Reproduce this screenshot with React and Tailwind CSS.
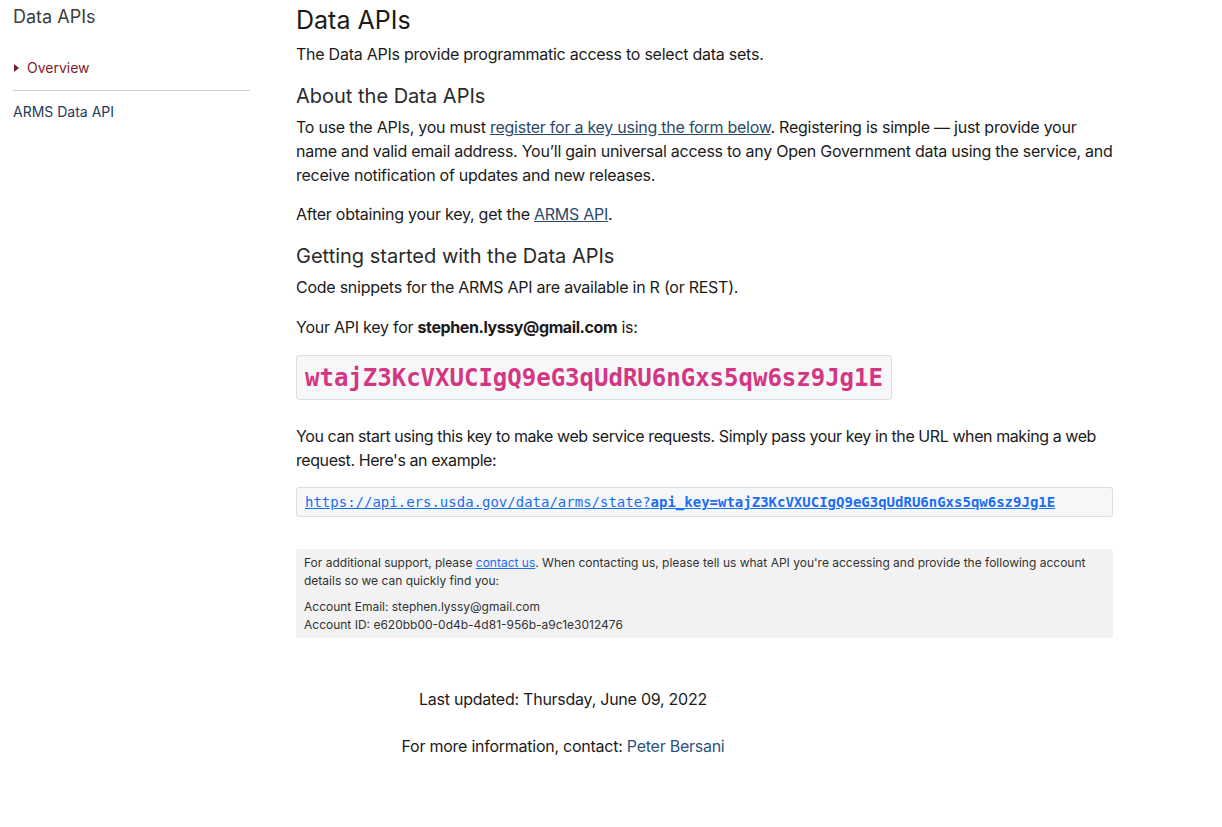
export default function App() {
  const key = "wtajZ3KcVXUCIgQ9eG3qUdRU6nGxs5qw6sz9Jg1E";
  return (
    <div className="flex min-h-[827px] bg-white text-[#1b1b1b]" style={{ fontFamily: "Inter, 'Noto Sans', sans-serif" }}>
      <aside className="w-[250px] shrink-0 pl-[13px]">
        <div className="mt-[5px] text-[18px] leading-[24px] text-[#3d3d3d]">Data APIs</div>
        <div className="mt-[29px] flex items-center gap-[8px] text-[14px] leading-[20px] text-[#7d1a2b]">
          <svg width="5" height="8" viewBox="0 0 5 8" className="ml-[1px]"><path d="M0 0 L5 4 L0 8 Z" fill="#7d1a2b" /></svg>
          <span>Overview</span>
        </div>
        <div className="mt-[12px] h-px bg-[#cfcfcf]" />
        <div className="mt-[11px] text-[14px] leading-[20px] text-[#1f3b5a]">ARMS Data API</div>
      </aside>
      <main className="ml-[46px] w-[817px] shrink-0 tracking-[-0.25px]">
        <h1 className="mt-[4px] text-[25px] leading-[32px] font-normal tracking-normal">Data APIs</h1>
        <p className="mt-[6px] text-[16px] leading-[24px]">The Data APIs provide programmatic access to select data sets.</p>
        <h2 className="mt-[16px] text-[20px] leading-[28px] font-normal text-[#2a2a2a] tracking-normal">About the Data APIs</h2>
        <p className="mt-[5px] text-[16px] leading-[24px]">
          To use the APIs, you must <a className="underline text-[#2c4a6b]">register for a key using the form below</a>. Registering is simple — just provide your name and valid email address. You’ll gain universal access to any Open Government data using the service, and receive notification of updates and new releases.
        </p>
        <p className="mt-[15px] text-[16px] leading-[24px]">
          After obtaining your key, get the <a className="underline text-[#2c4a6b]">ARMS API</a>.
        </p>
        <h2 className="mt-[16px] text-[20px] leading-[28px] font-normal text-[#2a2a2a] tracking-normal">Getting started with the Data APIs</h2>
        <p className="mt-[5px] text-[16px] leading-[24px]">Code snippets for the ARMS API are available in R (or REST).</p>
        <p className="mt-[16px] text-[16px] leading-[24px]">Your API key for <b className="font-bold tracking-[-0.4px]">stephen.lyssy@gmail.com</b> is:</p>
        <div className="mt-[16px] inline-flex h-[45px] items-center rounded-[3px] border border-[#dadde1] bg-[#f6f7f9] px-[8px] tracking-normal">
          <code className="text-[24px] font-bold text-[#d33682]" style={{ fontFamily: "'DejaVu Sans Mono', monospace" }}>{key}</code>
        </div>
        <p className="mt-[24px] text-[16px] leading-[24px] tracking-[-0.42px]">You can start using this key to make web service requests. Simply pass your key in the URL when making a web request. Here's an example:</p>
        <div className="mt-[15px] flex h-[30px] items-center rounded-[3px] border border-[#dadde1] bg-[#f6f7f9] px-[8px] tracking-normal">
          <a className="underline text-[14px] text-[#1a6ef5]" style={{ fontFamily: "'DejaVu Sans Mono', monospace" }}>
            https://api.ers.usda.gov/data/arms/state?<b className="font-bold">api_key={key}</b>
          </a>
        </div>
        <div className="mt-[32px] rounded-[3px] bg-[#f2f2f2] px-[8px] pt-[5px] pb-[4px] text-[12px] leading-[18px] text-[#333] tracking-normal">
          <p>For additional support, please <a className="underline text-[#1a6ef5]">contact us</a>. When contacting us, please tell us what API you're accessing and provide the following account details so we can quickly find you:</p>
          <p className="mt-[8px]">Account Email: stephen.lyssy@gmail.com</p>
          <p>Account ID: e620bb00-0d4b-4d81-956b-a9c1e3012476</p>
        </div>
        <div className="w-[534px] text-center text-[16px] leading-[24px]">
          <p className="mt-[49px]">Last updated: Thursday, June 09, 2022</p>
          <p className="mt-[23px]">For more information, contact: <a className="text-[#2b5382]">Peter Bersani</a></p>
        </div>
      </main>
    </div>
  );
}
